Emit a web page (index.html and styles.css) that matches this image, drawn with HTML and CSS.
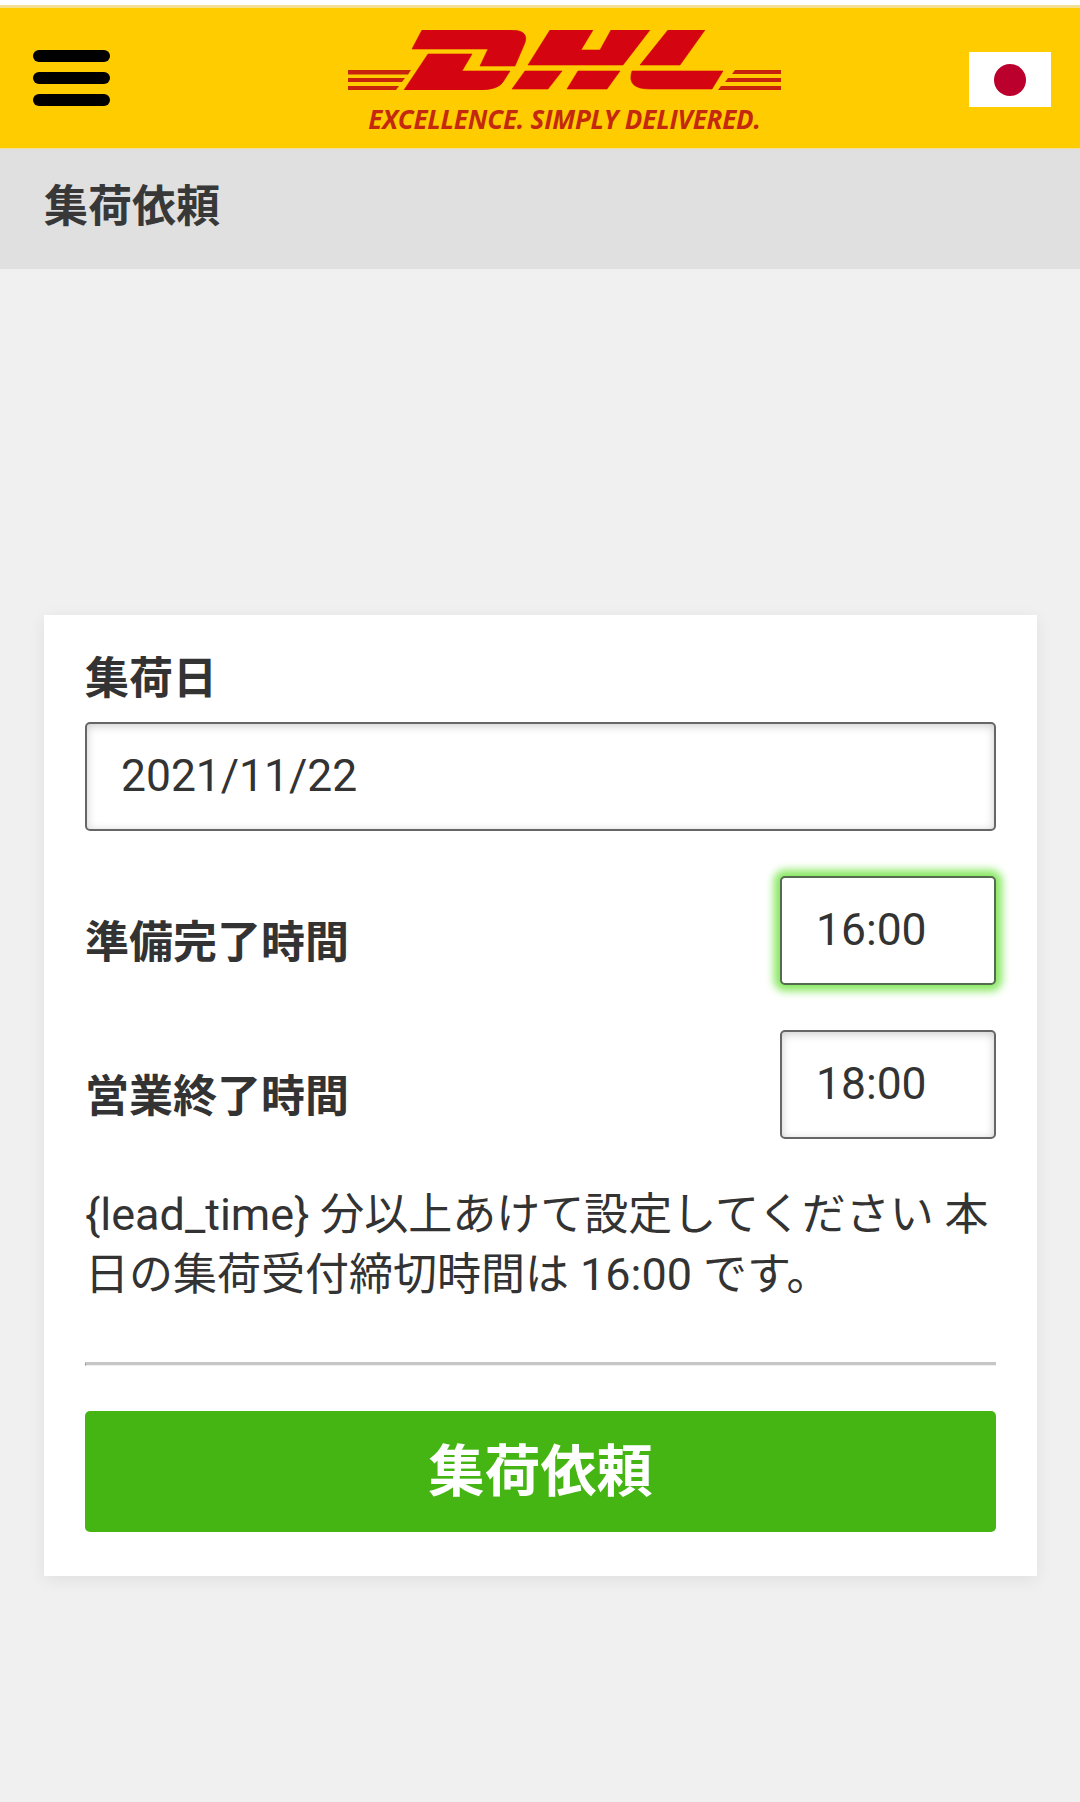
FILE: index.html
```html
<!DOCTYPE html>
<html lang="ja">

<head>
  <meta charset="UTF-8">
  <meta name="viewport" content="width=device-width, initial-scale=1.0">
  <title>集荷依頼</title>
  <link rel="stylesheet" href="styles.css">
</head>

<body>
  <header class="header">
    <div class="menu-icon">
      <span></span>
      <span></span>
      <span></span>
    </div>
    <div class="logo">
      <svg class="logo-mark" viewBox="348 30 433 60" width="433" height="60">
        <!-- D -->
        <path class="logo-red" d="M422 30H510Q531 30 524 45L515 66H480L488 49H412Z" />
        <path class="logo-red" d="M428 54H472L462 71H510L503 82Q498 90 478 90H404Z" />
        <!-- H -->
        <path class="logo-red" d="M550 30H593L581 50H600L611 30H650L623 65H528Z" />
        <path class="logo-red" d="M525 71H562L548 89H512Z" />
        <path class="logo-red" d="M578 71H620L607 89H567Z" />
        <!-- L -->
        <path class="logo-red" d="M668 30H705L680 65H640Z" />
        <path class="logo-red" d="M632 71H723L712 89H650Q626 89 632 71Z" />
        <!-- speed lines -->
        <path class="logo-line" d="M348 70H411L408 74.500H348ZM348 78H405L402 82H348ZM348 86H399L396 90H348Z" />
        <path class="logo-line" d="M735 70H781V74H732ZM728 78H781V82H725ZM721 86H781V90H718Z" />
      </svg>
      <div class="tagline">EXCELLENCE. SIMPLY DELIVERED.</div>
    </div>
    <div class="flag">
      <span class="flag-sun"></span>
    </div>
  </header>

  <div class="page-title">集荷依頼</div>

  <main class="card">
    <label class="field-label" for="pickup_date">集荷日</label>
    <input class="text-input" type="text" id="pickup_date" value="2021/11/22">

    <div class="time-row">
      <label class="field-label" for="ready_time">準備完了時間</label>
      <input class="text-input time-input active" type="text" id="ready_time" value="16:00">
    </div>
    <div class="time-row">
      <label class="field-label" for="close_time">営業終了時間</label>
      <input class="text-input time-input" type="text" id="close_time" value="18:00">
    </div>

    <p class="note"><span class="latin">{lead_time}</span> 分以上あけて設定してください 本<br>日の集荷受付締切時間は <span class="latin">16:00</span> です。</p>

    <hr class="divider">

    <button class="submit-btn" type="button">集荷依頼</button>
  </main>
</body>

</html>
```

FILE: styles.css
```css
body {
  font-family: Roboto, "Noto Sans CJK JP", sans-serif;
  margin: 0;
  padding: 5px 0 0;
  min-height: 1797px;
  background-color: #f0f0f0;
  background-image: linear-gradient(#fff 5px, transparent 5px);
  color: #333;
}

.header {
  display: flex;
  align-items: center;
  height: 140px;
  padding-left: 33px;
  background-color: #ffcc00;
  border-top: 3px solid #f3df92;
  border-bottom: 1px solid #f3df92;
}

.menu-icon {
  display: flex;
  flex-direction: column;
  gap: 10px;
  width: 77px;
  margin-right: 238px;
}

.menu-icon span {
  height: 12px;
  border-radius: 6px;
  background-color: #000;
}

.logo {
  align-self: flex-start;
  width: 433px;
  margin-right: 188px;
  margin-top: 22px;
}

.logo-mark {
  display: block;
}

.logo-red {
  fill: #d40511;
  stroke: #d40511;
  stroke-width: 0.6;
}

.logo-line {
  fill: #c8240d;
}

.tagline {
  margin-top: 14px;
  font-family: "Open Sans", sans-serif;
  font-size: 26px;
  font-style: italic;
  font-weight: 700;
  line-height: 30px;
  letter-spacing: -0.2px;
  text-align: center;
  white-space: nowrap;
  color: #c4280e;
}

.flag {
  display: flex;
  align-items: center;
  justify-content: center;
  width: 82px;
  height: 55px;
  margin-top: 3px;
  background-color: #fff;
}

.flag-sun {
  width: 32px;
  height: 32px;
  border-radius: 50%;
  background-color: #bc002d;
}

.page-title {
  height: 120px;
  padding-left: 44px;
  font-size: 44px;
  font-weight: 700;
  line-height: 116px;
  background-color: #e0e0e0;
  color: #383838;
}

.card {
  margin: 346px 43px 0 44px;
  padding: 32px 41px 44px;
  background-color: #fff;
  box-shadow: 0 4px 16px rgba(0, 0, 0, 0.07);
}

.field-label {
  display: block;
  font-size: 44px;
  font-weight: 700;
  line-height: 64px;
}

.text-input {
  display: block;
  width: 100%;
  height: 109px;
  margin-top: 11px;
  padding: 0 0 2px 34px;
  border: 2px solid #666;
  border-radius: 5px;
  box-sizing: border-box;
  font-family: inherit;
  font-size: 44.400px;
  color: #333;
  background-color: #fff;
  box-shadow: inset 0 2px 10px rgba(0, 0, 0, 0.2);
  outline: none;
}

.time-row {
  display: flex;
  align-items: flex-end;
  justify-content: space-between;
  margin-top: 45px;
}

.time-row .field-label {
  margin-bottom: 10px;
}

.time-input {
  width: 216px;
  margin-top: 0;
}

.time-input.active {
  border-color: #556b50;
  box-shadow: 0 0 8px 6px #86e85f;
}

.note {
  margin: 46px 0 0;
  font-size: 44px;
  line-height: 60px;
}

.latin {
  font-size: 45px;
}

.divider {
  margin: 57px 0 0;
  height: 0;
  border: 0;
  border-top: 3px solid #c6c6c6;
  border-left: 1px solid #888;
  border-bottom: 1px solid #eee;
}

.submit-btn {
  display: block;
  width: 100%;
  height: 121px;
  margin-top: 45px;
  padding: 0 0 10px;
  border: 0;
  border-radius: 5px;
  font-family: inherit;
  font-size: 56px;
  font-weight: 700;
  color: #fff;
  background-color: #45b513;
}
```
